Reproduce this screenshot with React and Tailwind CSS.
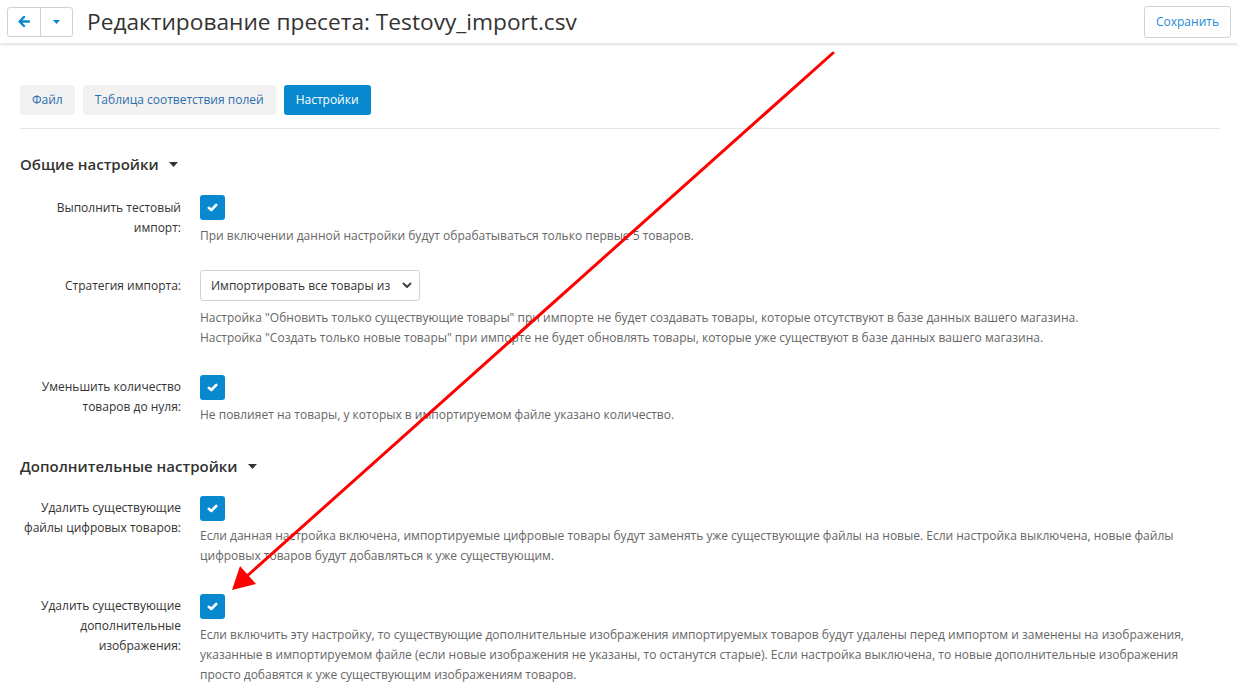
import React from 'react';

const font = { fontFamily: '"Open Sans", "Noto Sans", sans-serif' };

function Check() {
  return (
    <div className="w-[25px] h-[25px] rounded-[3px] bg-[#0788cf] flex items-center justify-center">
      <svg width="11" height="9" viewBox="0 0 11 9">
        <path d="M1.8 4.8 L4.3 7 L9.2 2" stroke="#fff" strokeWidth="2.6" fill="none" strokeLinecap="round" strokeLinejoin="round" />
      </svg>
    </div>
  );
}

function Row({ label, children, className = '' }) {
  return (
    <div className={`flex ${className}`}>
      <div className="w-[161px] shrink-0 text-right text-[12px] leading-[20px] text-[#333]">{label}</div>
      <div className="flex-1 pl-[19px]">{children}</div>
    </div>
  );
}

function Desc({ children }) {
  return <div className="text-[12px] leading-[20px] text-[#666]">{children}</div>;
}

function Heading({ children, className = '' }) {
  return (
    <div className={`flex items-center gap-[10px] text-[15px] leading-[22px] font-semibold text-[#333] ${className}`}>
      {children}
      <svg width="9" height="5" viewBox="0 0 9 5"><path d="M0 0 H9 L4.5 5 Z" fill="#333" /></svg>
    </div>
  );
}

export default function App() {
  return (
    <div className="relative w-[1238px] h-[691px] overflow-hidden bg-white" style={font}>
      {/* шапка */}
      <div className="h-[43px] flex items-center justify-between pl-[7px] pr-[7px] bg-white shadow-[0_2px_3px_rgba(0,0,0,0.12)] relative z-10">
        <div className="flex items-center">
          <div className="flex h-[30px] border border-[#ccd3db] rounded-[3px]">
            <div className="w-[33px] flex items-center justify-center border-r border-[#ccd3db]">
              <svg width="12" height="11" viewBox="0 0 12 11">
                <path d="M6 1 L1.5 5.5 L6 10 M1.8 5.5 H11" stroke="#0788cf" strokeWidth="2.4" fill="none" strokeLinecap="round" strokeLinejoin="round" />
              </svg>
            </div>
            <div className="w-[31px] flex items-center justify-center">
              <svg width="7" height="4" viewBox="0 0 7 4"><path d="M0 0 H7 L3.5 4 Z" fill="#0788cf" /></svg>
            </div>
          </div>
          <h1 className="ml-[14px] text-[22.7px] leading-[30px] text-[#333] font-normal">Редактирование пресета: Testovy_import.csv</h1>
        </div>
        <button className="h-[32px] px-[11px] border border-[#ccd3db] rounded-[3px] text-[12px] text-[#1e8ad2] bg-white">Сохранить</button>
      </div>

      <div className="px-[20px] pr-[18px]">
        {/* вкладки */}
        <div className="flex gap-[8px] pt-[42px]">
          <div className="h-[30px] px-[12px] flex items-center rounded-[3px] bg-[#f2f2f2] text-[12px] text-[#2b6fae]">Файл</div>
          <div className="h-[30px] px-[12px] flex items-center rounded-[3px] bg-[#f2f2f2] text-[12px] text-[#2b6fae]">Таблица соответствия полей</div>
          <div className="h-[30px] px-[12px] flex items-center rounded-[3px] bg-[#0788cf] text-[12px] text-white">Настройки</div>
        </div>
        <div className="mt-[13px] border-t border-[#dfe5ec]" />

        <Heading className="mt-[24px]">Общие настройки</Heading>

        <Row className="mt-[20px]" label={<div className="pt-[3px]">Выполнить тестовый<br />импорт:</div>}>
          <Check />
          <div className="mt-[6px]"><Desc>При включении данной настройки будут обрабатываться только первые 5 товаров.</Desc></div>
        </Row>

        <Row className="mt-[24px]" label={<div className="pt-[6px]">Стратегия импорта:</div>}>
          <div className="w-[220px] h-[31px] border border-[#ccd3db] rounded-[3px] flex items-center justify-between pl-[10px] pr-[7px] text-[12px] text-[#333]">
            <span>Импортировать все товары из</span>
            <svg width="10" height="7" viewBox="0 0 10 7"><path d="M1.5 1.5 L5 5 L8.5 1.5" stroke="#444" strokeWidth="2" fill="none" strokeLinecap="round" strokeLinejoin="round" /></svg>
          </div>
          <div className="mt-[7px]">
            <Desc>
              Настройка "Обновить только существующие товары" при импорте не будет создавать товары, которые отсутствуют в базе данных вашего магазина.<br />
              Настройка "Создать только новые товары" при импорте не будет обновлять товары, которые уже существуют в базе данных вашего магазина.
            </Desc>
          </div>
        </Row>

        <Row className="mt-[27px]" label={<div className="pt-[2px]">Уменьшить количество<br />товаров до нуля:</div>}>
          <Check />
          <div className="mt-[5px]"><Desc>Не повлияет на товары, у которых в импортируемом файле указано количество.</Desc></div>
        </Row>

        <Heading className="mt-[30px]">Дополнительные настройки</Heading>

        <Row className="mt-[19px]" label={<div className="pt-[2px]">Удалить существующие<br />файлы цифровых товаров:</div>}>
          <Check />
          <div className="mt-[5px]">
            <Desc>Если данная настройка включена, импортируемые цифровые товары будут заменять уже существующие файлы на новые. Если настройка выключена, новые файлы цифровых товаров будут добавляться к уже существующим.</Desc>
          </div>
        </Row>

        <Row className="mt-[28px]" label={<div className="pt-[2px]">Удалить существующие<br />дополнительные<br />изображения:</div>}>
          <Check />
          <div className="mt-[6px]">
            <Desc>Если включить эту настройку, то существующие дополнительные изображения импортируемых товаров будут удалены перед импортом и заменены на изображения, указанные в импортируемом файле (если новые изображения не указаны, то останутся старые). Если настройка выключена, то новые дополнительные изображения просто добавятся к уже существующим изображениям товаров.</Desc>
          </div>
        </Row>
      </div>

      {/* красная стрелка поверх */}
      <svg className="absolute inset-0 pointer-events-none z-20" width="1238" height="691" viewBox="0 0 1238 691">
        <line x1="833" y1="53" x2="246" y2="577" stroke="#ff0000" strokeWidth="3" strokeLinecap="round" />
        <path d="M232 590 L240 566 L256 584 Z" fill="#ff0000" />
      </svg>
    </div>
  );
}
